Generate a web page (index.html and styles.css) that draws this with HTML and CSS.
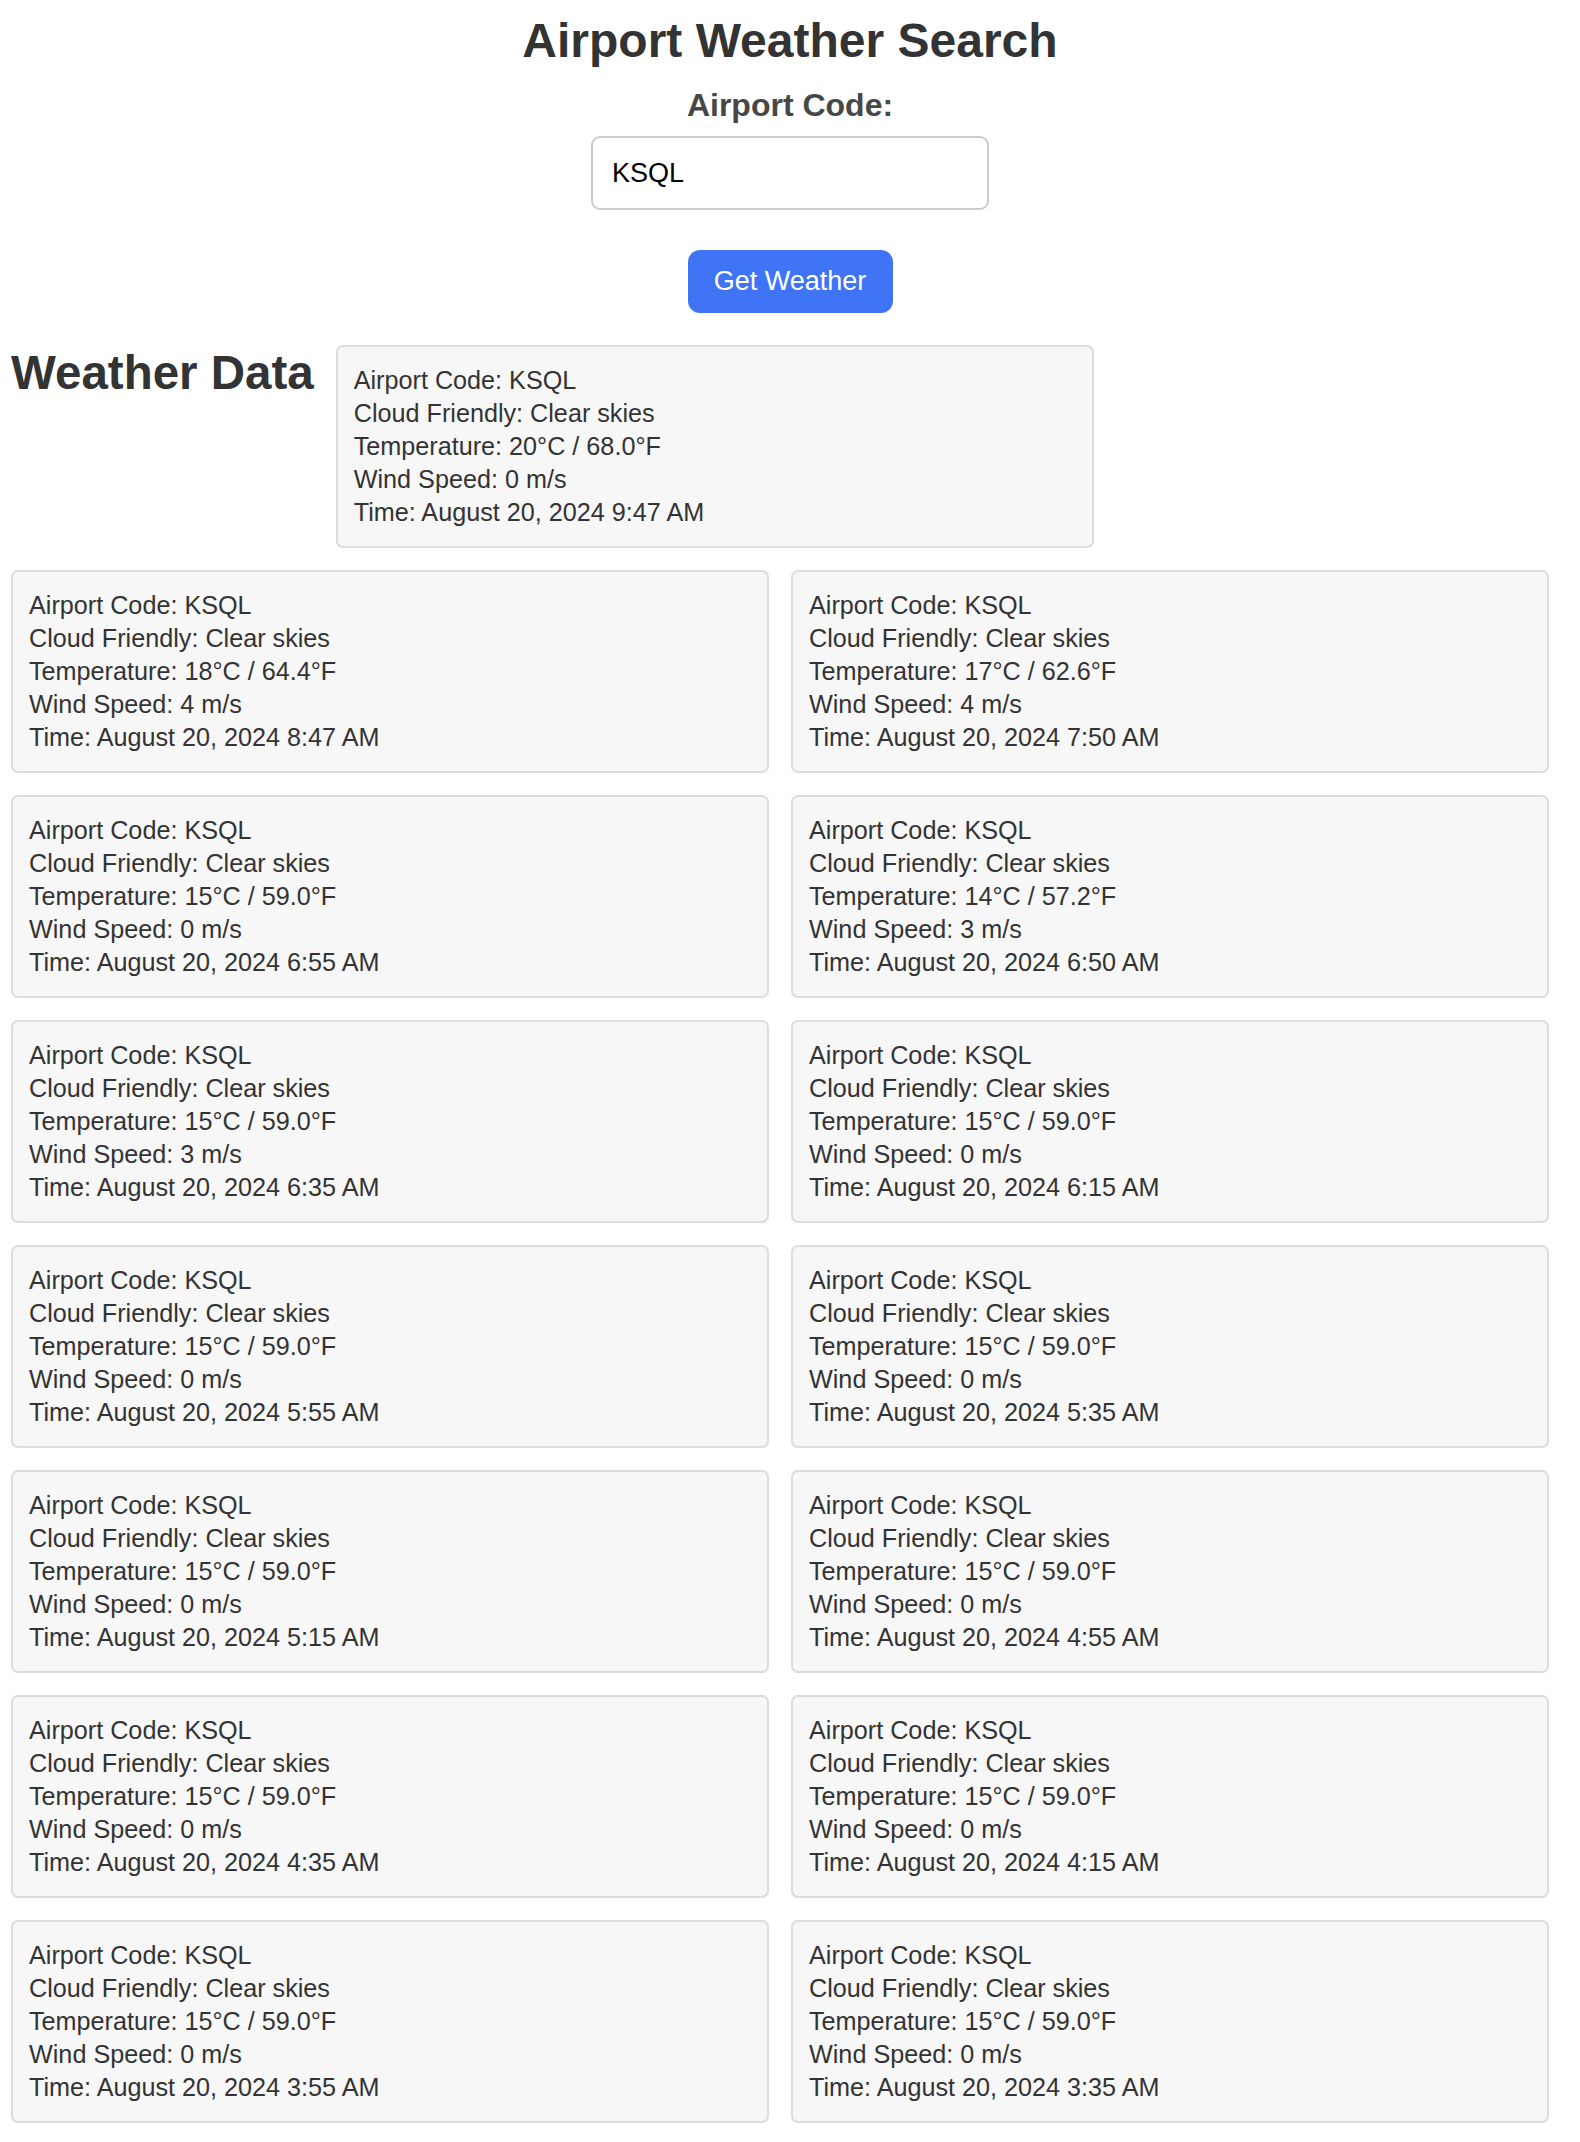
FILE: index.html
```html
<!DOCTYPE html>
<html lang="en">
<head>
<meta charset="utf-8">
<title>Airport Weather Search</title>
<link rel="stylesheet" href="styles.css">
</head>
<body>
<header class="search">
  <h1 class="title">Airport Weather Search</h1>
  <label class="label" for="code">Airport Code:</label>
  <input class="code-input" id="code" type="text" value="KSQL">
  <button class="btn" type="button">Get Weather</button>
</header>
<section class="weather">
  <h2 class="weather-title">Weather Data</h2>
  <div class="card"><div>Airport Code: KSQL</div><div>Cloud Friendly: Clear skies</div><div>Temperature: 20°C / 68.0°F</div><div>Wind Speed: 0 m/s</div><div>Time: August 20, 2024 9:47 AM</div></div>
  <div class="card"><div>Airport Code: KSQL</div><div>Cloud Friendly: Clear skies</div><div>Temperature: 18°C / 64.4°F</div><div>Wind Speed: 4 m/s</div><div>Time: August 20, 2024 8:47 AM</div></div>
  <div class="card"><div>Airport Code: KSQL</div><div>Cloud Friendly: Clear skies</div><div>Temperature: 17°C / 62.6°F</div><div>Wind Speed: 4 m/s</div><div>Time: August 20, 2024 7:50 AM</div></div>
  <div class="card"><div>Airport Code: KSQL</div><div>Cloud Friendly: Clear skies</div><div>Temperature: 15°C / 59.0°F</div><div>Wind Speed: 0 m/s</div><div>Time: August 20, 2024 6:55 AM</div></div>
  <div class="card"><div>Airport Code: KSQL</div><div>Cloud Friendly: Clear skies</div><div>Temperature: 14°C / 57.2°F</div><div>Wind Speed: 3 m/s</div><div>Time: August 20, 2024 6:50 AM</div></div>
  <div class="card"><div>Airport Code: KSQL</div><div>Cloud Friendly: Clear skies</div><div>Temperature: 15°C / 59.0°F</div><div>Wind Speed: 3 m/s</div><div>Time: August 20, 2024 6:35 AM</div></div>
  <div class="card"><div>Airport Code: KSQL</div><div>Cloud Friendly: Clear skies</div><div>Temperature: 15°C / 59.0°F</div><div>Wind Speed: 0 m/s</div><div>Time: August 20, 2024 6:15 AM</div></div>
  <div class="card"><div>Airport Code: KSQL</div><div>Cloud Friendly: Clear skies</div><div>Temperature: 15°C / 59.0°F</div><div>Wind Speed: 0 m/s</div><div>Time: August 20, 2024 5:55 AM</div></div>
  <div class="card"><div>Airport Code: KSQL</div><div>Cloud Friendly: Clear skies</div><div>Temperature: 15°C / 59.0°F</div><div>Wind Speed: 0 m/s</div><div>Time: August 20, 2024 5:35 AM</div></div>
  <div class="card"><div>Airport Code: KSQL</div><div>Cloud Friendly: Clear skies</div><div>Temperature: 15°C / 59.0°F</div><div>Wind Speed: 0 m/s</div><div>Time: August 20, 2024 5:15 AM</div></div>
  <div class="card"><div>Airport Code: KSQL</div><div>Cloud Friendly: Clear skies</div><div>Temperature: 15°C / 59.0°F</div><div>Wind Speed: 0 m/s</div><div>Time: August 20, 2024 4:55 AM</div></div>
  <div class="card"><div>Airport Code: KSQL</div><div>Cloud Friendly: Clear skies</div><div>Temperature: 15°C / 59.0°F</div><div>Wind Speed: 0 m/s</div><div>Time: August 20, 2024 4:35 AM</div></div>
  <div class="card"><div>Airport Code: KSQL</div><div>Cloud Friendly: Clear skies</div><div>Temperature: 15°C / 59.0°F</div><div>Wind Speed: 0 m/s</div><div>Time: August 20, 2024 4:15 AM</div></div>
  <div class="card"><div>Airport Code: KSQL</div><div>Cloud Friendly: Clear skies</div><div>Temperature: 15°C / 59.0°F</div><div>Wind Speed: 0 m/s</div><div>Time: August 20, 2024 3:55 AM</div></div>
  <div class="card"><div>Airport Code: KSQL</div><div>Cloud Friendly: Clear skies</div><div>Temperature: 15°C / 59.0°F</div><div>Wind Speed: 0 m/s</div><div>Time: August 20, 2024 3:35 AM</div></div>
</section>
</body>
</html>
```
FILE: styles.css
```css
* {
  box-sizing: border-box;
}

body {
  margin: 0;
  padding-bottom: 20px;
  font-family: "Liberation Sans", Arial, Helvetica, sans-serif;
  color: #333;
  background: #fff;
}

.search {
  display: flex;
  flex-direction: column;
  align-items: center;
  padding-top: 13px;
}

.title {
  margin: 0;
  font-size: 48px;
  line-height: 55px;
  font-weight: bold;
  color: #333;
}

.label {
  margin-top: 19px;
  font-size: 32px;
  line-height: 37px;
  font-weight: bold;
  color: #474747;
}

.code-input {
  margin-top: 12px;
  width: 398px;
  height: 74px;
  padding: 0 19px;
  border: 2px solid #cccccc;
  border-radius: 9px;
  font-family: "Liberation Sans", Arial, sans-serif;
  font-size: 27px;
  color: #000;
  background: #fff;
  outline: none;
}

.btn {
  margin-top: 40px;
  width: 205px;
  height: 63px;
  padding: 0;
  border: none;
  border-radius: 12px;
  background: #3e74f5;
  color: #fff;
  font-family: "Liberation Sans", Arial, sans-serif;
  font-size: 27px;
  cursor: pointer;
}

.weather {
  display: flex;
  flex-wrap: wrap;
  gap: 22px;
  width: 1538px;
  margin: 32px 0 0 11px;
}

.weather-title {
  margin: 0;
  font-size: 47.5px;
  line-height: 55px;
  font-weight: bold;
  color: #333;
}

.card {
  width: 758px;
  padding: 17px 16px;
  border: 2px solid #dcdcdc;
  border-radius: 7px;
  background: #f7f7f7;
  font-size: 25.2px;
  line-height: 33px;
  color: #333;
}
```
